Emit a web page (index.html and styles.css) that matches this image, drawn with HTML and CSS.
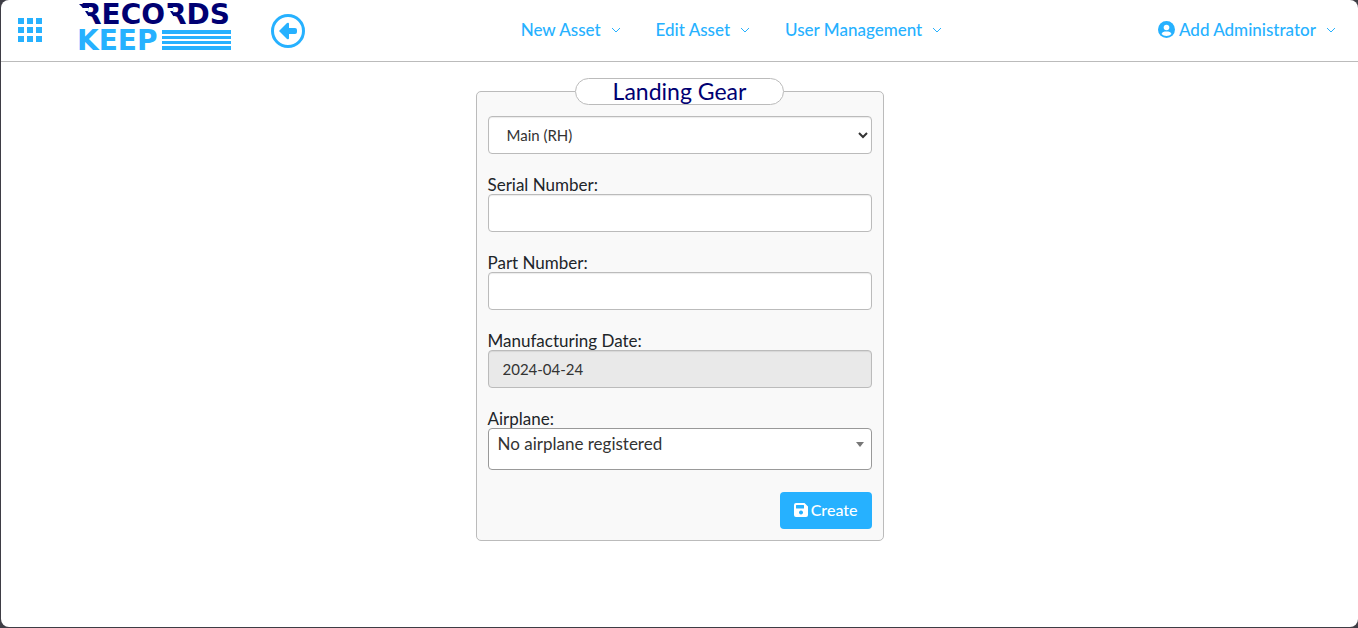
FILE: index.html
```html
<!DOCTYPE html>
<html lang="en">
<head>
  <meta charset="UTF-8" />
  <meta name="viewport" content="width=device-width, initial-scale=1" />
  <title>Records Keep - Landing Gear</title>
  <link rel="stylesheet" href="styles.css">
</head>
<body>
  <div class="page">
    <header class="topbar">
      <div class="topbar-left">
        <a href="#" class="apps" aria-label="Menu">
          <svg width="24" height="24" viewBox="0 0 24 24" fill="currentColor">
            <path d="M0 0h6v6H0zM9 0h6v6H9zM18 0h6v6h-6zM0 9h6v6H0zM9 9h6v6H9zM18 9h6v6h-6zM0 18h6v6H0zM9 18h6v6H9zM18 18h6v6h-6z"/>
          </svg>
        </a>
        <a href="#" class="logo" aria-label="Records Keep">
          <svg width="154" height="54" viewBox="0 0 154 54">
            <text class="logo-records" x="1" y="24">RECORDS</text>
            <text class="logo-keep" x="-2" y="50">KEEP</text>
            <path class="logo-cut" d="M0 8h9v3H6l9 14H0zM87 8h7v3h-3l9 14H87z"/>
            <path class="logo-flag" d="M0 4h10v4H4z"/>
            <path class="logo-lines" d="M83 30h69v4H83zM83 36h69v3H83zM83 41h69v3H83zM83 46h69v4H83z"/>
          </svg>
        </a>
        <a href="#" class="back" aria-label="Back">
          <svg width="34" height="34" viewBox="0 0 34 34">
            <circle cx="17" cy="17" r="15.500" fill="none" stroke="currentColor" stroke-width="3"/>
            <path fill="currentColor" d="M8 17l8-8q2-1 2 1v4h6q2 0 2 2v2q0 2-2 2h-6v4q0 2-2 1z"/>
          </svg>
        </a>
      </div>

      <nav class="menu">
        <a href="#">New Asset <svg class="chevron" viewBox="0 0 10 6"><path d="M1 1l4 4 4-4"/></svg></a>
        <a href="#">Edit Asset <svg class="chevron" viewBox="0 0 10 6"><path d="M1 1l4 4 4-4"/></svg></a>
        <a href="#">User Management <svg class="chevron" viewBox="0 0 10 6"><path d="M1 1l4 4 4-4"/></svg></a>
      </nav>

      <nav class="menu">
        <a href="#">
          <svg class="user-icon" viewBox="0 0 17 17">
            <circle cx="8.500" cy="8.500" r="8.500" fill="currentColor"/>
            <circle cx="8.500" cy="6.500" r="2.800" fill="#fff"/>
            <path d="M3.500 13q.8-2.600 3.200-2.600h3.600q2.400 0 3.200 2.600-2 2-5 2t-5-2z" fill="#fff"/>
          </svg>
          Add Administrator
          <svg class="chevron" viewBox="0 0 10 6"><path d="M1 1l4 4 4-4"/></svg>
        </a>
      </nav>
    </header>

    <main>
      <form>
        <fieldset class="card">
          <legend>Landing Gear</legend>
          <select class="control position" aria-label="Position">
            <option>Main (RH)</option>
            <option>Main (LH)</option>
            <option>Nose</option>
          </select>
          <div class="field">
            <label for="serial">Serial Number:</label>
            <input class="control" type="text" id="serial">
          </div>
          <div class="field">
            <label for="part">Part Number:</label>
            <input class="control" type="text" id="part">
          </div>
          <div class="field">
            <label for="date">Manufacturing Date:</label>
            <input class="control" type="text" id="date" value="2024-04-24" readonly>
          </div>
          <div class="field">
            <label for="airplane">Airplane:</label>
            <div class="airplane-wrap">
              <select class="airplane" id="airplane">
                <option>No airplane registered</option>
              </select>
            </div>
          </div>
          <button type="submit" class="create">
            <svg width="14" height="14" viewBox="0 0 14 14">
              <path fill="currentColor" fill-rule="evenodd" d="M2 0h8.500L14 3.500V12q0 2-2 2H2q-2 0-2-2V2q0-2 2-2zM2.500 2q-.5 0-.5.500V5q0 .5.500.500h7q.5 0 .5-.5V2.500q0-.5-.5-.5zM7 7.500a2 2 0 1 0 .01 0z"/>
            </svg>
            Create
          </button>
        </fieldset>
      </form>
    </main>
  </div>
</body>
</html>
```
FILE: styles.css
```css
* {
  margin: 0;
  padding: 0;
  box-sizing: border-box;
}

body {
  font-family: Lato, sans-serif;
  font-size: 17px;
  color: #212529;
  background-color: #3e3d45;
  min-height: 100vh;
  padding: 0 0 1px 1px;
  display: flex;
}

.page {
  flex: 1;
  background-color: #fff;
  border-radius: 8px;
}

.topbar {
  display: flex;
  align-items: center;
  justify-content: space-between;
  height: 62px;
  padding: 0 22px 0 17px;
  border-bottom: 1px solid #bbb;
}

.topbar a {
  color: #26b1ff;
  text-decoration: none;
}

.topbar svg {
  display: block;
}

.topbar-left {
  display: flex;
  align-items: center;
}

.apps {
  padding-bottom: 2px;
}

.logo {
  margin: 0 38px 7px 37px;
}

.logo svg {
  overflow: visible;
}

.logo-records,
.logo-keep {
  font-family: "DejaVu Sans", sans-serif;
  font-size: 28px;
  font-weight: bold;
}

.logo-records,
.logo-flag {
  fill: #000072;
}

.logo-keep,
.logo-lines {
  fill: #26b1ff;
}

.logo-cut {
  fill: #fff;
}

.menu {
  display: flex;
  gap: 35px;
  padding-bottom: 2px;
  font-weight: 500;
}

.menu a {
  display: flex;
  align-items: center;
}

.menu .chevron {
  width: 10px;
  height: 6px;
  margin-left: 10px;
  fill: none;
  stroke: currentColor;
}

.user-icon {
  width: 17px;
  height: 17px;
  margin-right: 4px;
}

.card {
  width: 408px;
  max-width: 100%;
  margin: 16px auto 0;
  padding: 11px;
  border: 1px solid #bbb;
  border-radius: 5px;
  background-color: #f9f9f9;
}

legend {
  width: 209px;
  height: 27px;
  margin: 0 auto;
  border: 1px solid #bbb;
  border-radius: 14px;
  background-color: #fff;
  color: #000072;
  font-size: 23px;
  line-height: 24px;
  text-align: center;
}

.field {
  margin-top: 22px;
}

label {
  display: block;
  line-height: 18px;
}

.control {
  display: block;
  width: 100%;
  height: 38px;
  padding: 0 14px;
  border: 1px solid #bbb;
  border-radius: 4px;
  background-color: #fff;
  color: #333;
  font-family: inherit;
  font-size: 15px;
  box-shadow: inset 0 1px 1px rgba(0, 0, 0, 0.08);
}

.control[readonly] {
  background-color: #e9e9e9;
}

.position {
  padding: 0 0 0 14px;
}

.airplane-wrap {
  position: relative;
}

.airplane-wrap::after {
  content: "";
  position: absolute;
  top: 14px;
  right: 8px;
  border: 4px solid transparent;
  border-top: 5px solid #777;
  border-bottom: 0;
}

.airplane {
  display: block;
  appearance: none;
  width: 100%;
  height: 42px;
  padding: 0 24px 12px 9px;
  border: 1px solid #999;
  border-radius: 4px;
  background-color: #fff;
  color: #333;
  font-family: inherit;
  font-size: 17px;
}

.create {
  display: flex;
  align-items: center;
  gap: 3px;
  height: 37px;
  margin: 22px 0 0 auto;
  padding: 0 14px 2px;
  border: none;
  border-radius: 4px;
  background-color: #26b1ff;
  color: #fff;
  font-family: inherit;
  font-size: 16px;
  font-weight: 500;
  cursor: pointer;
}

.create:hover {
  background-color: #0d9dee;
}
```
